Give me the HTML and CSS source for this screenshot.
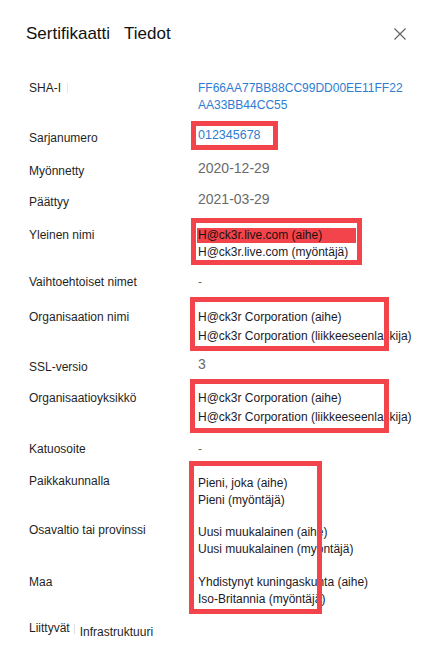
FILE: index.html
```html
<!DOCTYPE html>
<html lang="fi">
<head>
<meta charset="utf-8">
<title>Sertifikaatti Tiedot</title>
<link rel="stylesheet" href="styles.css">
</head>
<body>
<div class="panel">
  <header class="head">
    <h1 class="title"><span>Sertifikaatti</span><span>Tiedot</span></h1>
    <button class="close" aria-label="Sulje">
      <svg width="12" height="12" viewBox="0 0 12 12"><path d="M0.5 0.5L11.5 11.5M11.5 0.5L0.5 11.5" stroke="#5f5f5f" stroke-width="1.1" fill="none"/></svg>
    </button>
  </header>

  <div class="props">
    <div class="row">
      <div class="label">SHA-I<span class="sep"></span></div>
      <div class="value link">FF66AA77BB88CC99DD00EE11FF22<br>AA33BB44CC55</div>
    </div>
    <div class="row mt16">
      <div class="label">Sarjanumero</div>
      <div class="value link serial">012345678</div>
    </div>
    <div class="row mt16">
      <div class="label">Myönnetty</div>
      <div class="value muted big">2020-12-29</div>
    </div>
    <div class="row mt14">
      <div class="label">Päättyy</div>
      <div class="value muted big">2021-03-29</div>
    </div>
    <div class="row mt16">
      <div class="label">Yleinen nimi</div>
      <div class="value dark cn">
        <span class="hl">H@ck3r.live.com (aihe)</span>
        <span class="line">H@ck3r.live.com (myöntäjä)</span>
      </div>
    </div>
    <div class="row mt13">
      <div class="label">Vaihtoehtoiset nimet</div>
      <div class="value muted">-</div>
    </div>
    <div class="row mt18">
      <div class="label">Organisaation nimi</div>
      <div class="value dark org">H@ck3r Corporation (aihe)<br>H@ck3r Corporation (liikkeeseenlaskija)</div>
    </div>
    <div class="row mt12">
      <div class="label">SSL-versio</div>
      <div class="value muted big">3</div>
    </div>
    <div class="row mt14">
      <div class="label">Organisaatioyksikkö</div>
      <div class="value dark org">H@ck3r Corporation (aihe)<br>H@ck3r Corporation (liikkeeseenlaskija)</div>
    </div>
    <div class="row mt13">
      <div class="label">Katuosoite</div>
      <div class="value muted">-</div>
    </div>
    <div class="row mt15">
      <div class="label">Paikkakunnalla</div>
      <div class="value dark low">Pieni, joka (aihe)<br>Pieni (myöntäjä)</div>
    </div>
    <div class="row mt13">
      <div class="label">Osavaltio tai provinssi</div>
      <div class="value dark low">Uusi muukalainen (aihe)<br>Uusi muukalainen (myöntäjä)</div>
    </div>
    <div class="row mt16">
      <div class="label">Maa</div>
      <div class="value dark">Yhdistynyt kuningaskunta (aihe)<br>Iso-Britannia (myöntäjä)</div>
    </div>
    <div class="related mt12">
      <span class="label">Liittyvät</span><span class="sep2"></span><span class="infra">Infrastruktuuri</span>
    </div>
  </div>

  <div class="mark m-serial"></div>
  <div class="mark m-cn"></div>
  <div class="mark m-org"></div>
  <div class="mark m-ou"></div>
  <div class="mark m-loc"></div>
</div>
</body>
</html>
```

FILE: styles.css
```css
html, body {
  margin: 0;
  padding: 0;
  background: #ffffff;
}

body {
  font-family: "Liberation Sans", Arial, sans-serif;
  color: #1f1f1f;
}

.panel {
  position: relative;
  width: 426px;
  height: 653px;
  overflow: hidden;
  background: #ffffff;
}

.head {
  display: flex;
  align-items: flex-start;
  justify-content: space-between;
  padding: 22px 20px 0 26px;
  height: 58px;
  box-sizing: border-box;
}

.title {
  margin: 0;
  font-size: 17px;
  font-weight: 400;
  line-height: 24px;
  color: #111111;
  display: flex;
  gap: 14px;
}

.close {
  margin: 6px 0 0 0;
  padding: 0;
  border: 0;
  background: transparent;
  width: 12px;
  height: 12px;
  display: block;
}

.close svg {
  display: block;
}

.props {
  display: flex;
  flex-direction: column;
  padding: 22px 0 0 29px;
}

.row {
  display: grid;
  grid-template-columns: 169px 1fr;
  font-size: 12px;
  line-height: 17px;
}

.mt12 { margin-top: 12px; }
.mt13 { margin-top: 13px; }
.mt14 { margin-top: 14px; }
.mt15 { margin-top: 15px; }
.mt16 { margin-top: 16px; }
.mt18 { margin-top: 18px; }

.label {
  color: #1f1f1f;
  white-space: nowrap;
}

.sep {
  display: inline-block;
  width: 1px;
  height: 10px;
  background: #e6e6e6;
  margin-left: 6px;
  vertical-align: -1px;
}

.value {
  white-space: nowrap;
}

.link { color: #2d7dd2; }
.muted { color: #6a6a6a; }
.dark { color: #1c1a26; }

.serial {
  font-size: 12.5px;
  margin-top: -3px;
}

.big {
  font-size: 14px;
  margin-top: -3px;
}

.cn {
  padding-top: 1px;
  height: 34px;
  box-sizing: border-box;
}

.hl {
  display: block;
  width: 158px;
  margin-left: -1px;
  padding-left: 1px;
  line-height: 15px;
  margin-bottom: 1px;
  background: #f2444a;
  color: #1e1010;
}

.line {
  display: block;
}

.org {
  line-height: 19px;
  margin-top: -1px;
  margin-bottom: 1px;
}

.low {
  padding-top: 2px;
}

.related {
  display: flex;
  align-items: flex-start;
  font-size: 12px;
  line-height: 17px;
}

.sep2 {
  display: inline-block;
  width: 1px;
  height: 10px;
  background: #e0e0e0;
  margin: 4px 5px 0 4px;
}

.infra {
  margin-top: 4px;
  color: #1f1f1f;
}

.mark {
  position: absolute;
  border: 5px solid #f2444a;
  box-sizing: border-box;
  pointer-events: none;
}

.m-serial { left: 191px; top: 121px; width: 87px; height: 29px; }
.m-cn { left: 191px; top: 218px; width: 171px; height: 47px; }
.m-org { left: 190px; top: 297px; width: 199px; height: 54px; }
.m-ou { left: 190px; top: 379px; width: 199px; height: 54px; }
.m-loc { left: 189px; top: 461px; width: 133px; height: 153px; }
```
